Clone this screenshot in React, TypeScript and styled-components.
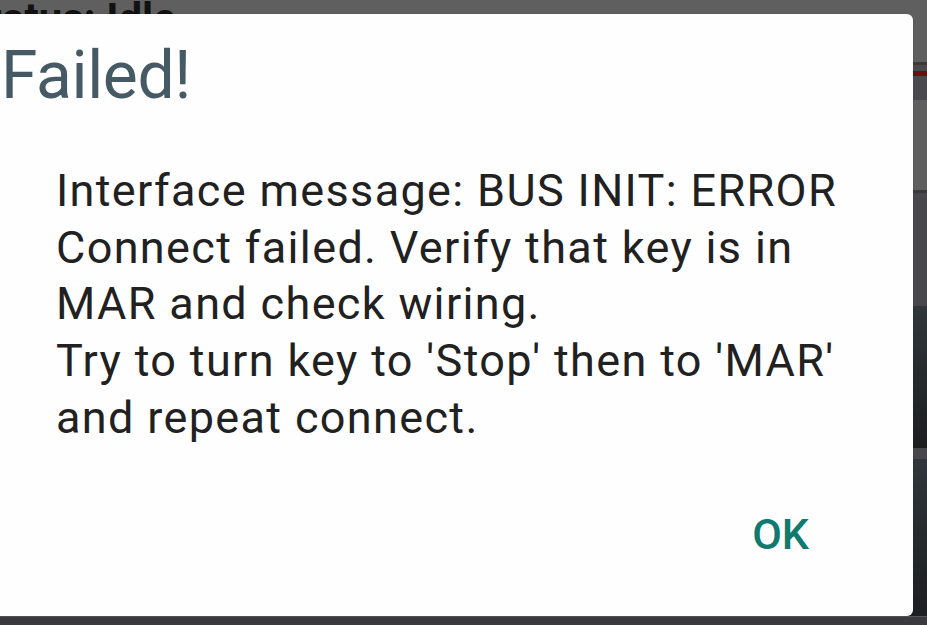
import React from "react";
import styled, { createGlobalStyle } from "styled-components";

const Global = createGlobalStyle`
  html, body { margin: 0; padding: 0; background: #5f5f5f; }
  body { font-family: Roboto, "Noto Sans", sans-serif; }
  * { box-sizing: border-box; }
`;

const Screen = styled.div`
  position: relative;
  width: 927px;
  height: 625px;
  overflow: hidden;
  background: #5f5f5f;
`;

const AppColumn = styled.div`
  display: flex;
  flex-direction: column;
  height: 100%;
`;

const Header = styled.div`
  height: 62px;
  background: #5f5f5f;
  overflow: hidden;
`;

const StatusText = styled.div`
  margin-left: -38px;
  margin-top: -6px;
  font-family: Roboto, sans-serif;
  font-weight: 700;
  font-size: 42px;
  line-height: 1.2;
  color: #111;
  white-space: nowrap;
`;

const Divider = styled.div`
  height: 3px;
  background: #3a3a3a;
`;

const Toolbar = styled.div`
  height: 35px;
  background: #4a4a4e;
  padding-top: 6px;
`;

const RedLine = styled.div`
  height: 5px;
  background: #6b0e10;
`;

const GrayArea = styled.div<{ $h: number }>`
  height: ${(p) => p.$h}px;
  background: #5f5f5f;
`;

const Panel = styled.div<{ $h: number; $dark?: boolean }>`
  height: ${(p) => p.$h}px;
  flex: ${(p) => (p.$h ? "none" : "1")};
  background: ${(p) =>
    p.$dark ? "linear-gradient(#30363b, #1c1e20)" : "#48474c"};
`;

const BottomBar = styled.div`
  height: 9px;
  background: #3a393e;
  border-top: 1px solid #55545a;
`;

const Dialog = styled.div`
  position: absolute;
  left: -20px;
  top: 14px;
  width: 933px;
  height: 602px;
  background: #fefefe;
  border-radius: 6px;
  box-shadow: 0 0 1px rgba(0, 0, 0, 0.4);
  display: flex;
  flex-direction: column;
  padding: 29px 0 0 0;
`;

const Title = styled.h2`
  margin: 0 0 0 21px;
  font-family: Roboto, sans-serif;
  font-weight: 400;
  font-size: 66px;
  line-height: 66px;
  letter-spacing: -0.4px;
  color: #455a64;
`;

const Message = styled.p`
  margin: 54px 20px 0 76px;
  font-family: Roboto, sans-serif;
  font-weight: 400;
  font-size: 45px;
  line-height: 56.67px;
  letter-spacing: 1.35px;
  color: #212121;
  white-space: pre-line;
`;

const Actions = styled.div`
  display: flex;
  justify-content: flex-end;
  margin-top: auto;
  padding: 0 88px 52px 0;
`;

const Button = styled.button`
  background: none;
  border: none;
  padding: 8px 16px;
  font-family: Roboto, sans-serif;
  font-weight: 500;
  font-size: 43px;
  line-height: 43px;
  color: #0f7a6d;
  cursor: pointer;
`;

export default function App() {
  return (
    <Screen>
      <Global />
      <AppColumn>
        <Header>
          <StatusText>Status: Idle</StatusText>
        </Header>
        <Divider />
        <Toolbar>
          <RedLine />
        </Toolbar>
        <GrayArea $h={90} />
        <Divider />
        <Panel $h={113} />
        <Panel $h={142} $dark />
        <Panel $h={11} />
        <Panel $h={0} $dark />
        <BottomBar />
      </AppColumn>
      <Dialog>
        <Title>Failed!</Title>
        <Message>
          {"Interface message: BUS INIT: ERROR\nConnect failed. Verify that key is in\nMAR and check wiring.\nTry to turn key to 'Stop' then to 'MAR'\nand repeat connect."}
        </Message>
        <Actions>
          <Button>OK</Button>
        </Actions>
      </Dialog>
    </Screen>
  );
}
